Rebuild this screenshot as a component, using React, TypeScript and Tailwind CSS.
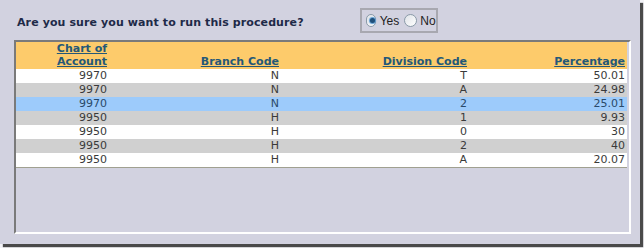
const rows = [
  { account: "9970", branch: "N", division: "T", pct: "50.01", tone: "white" },
  { account: "9970", branch: "N", division: "A", pct: "24.98", tone: "gray" },
  { account: "9970", branch: "N", division: "2", pct: "25.01", tone: "blue" },
  { account: "9950", branch: "H", division: "1", pct: "9.93", tone: "gray" },
  { account: "9950", branch: "H", division: "0", pct: "30", tone: "white" },
  { account: "9950", branch: "H", division: "2", pct: "40", tone: "gray" },
  { account: "9950", branch: "H", division: "A", pct: "20.07", tone: "white" },
];

const toneClass: Record<string, string> = {
  white: "bg-white",
  gray: "bg-[#d0d0d0]",
  blue: "bg-[#9dcbfb]",
};

const cols = "grid grid-cols-[93px_172px_188px_158px]";

const Radio = ({ checked }: { checked?: boolean }) => (
  <span className="relative inline-block w-[13px] h-[13px] rounded-full border border-[#8a9aa8] bg-gradient-to-br from-[#dfe3e8] to-white">
    {checked && (
      <span className="absolute left-[3px] top-[3px] w-[5px] h-[5px] rounded-full bg-[#1f4f7a] shadow-[0_0_1px_1px_#5a9ad0]" />
    )}
  </span>
);

const App = () => {
  return (
    <div className="w-[644px] h-[248px] bg-[#f2f2f6] overflow-hidden font-['DejaVu_Sans',Verdana,sans-serif]">
      <div className="w-[640px] h-[244px] bg-[#d2d2e0] shadow-[3px_3px_1px_#4a4a4a]">
        <div className="flex items-start pt-[8px] pl-[17px]">
          <h1 className="mt-[8px] text-[11px] leading-[14px] font-bold tracking-[0.1px] text-[#1e2a48]">
            Are you sure you want to run this procedure?
          </h1>
          <div className="ml-[56px] h-[25px] w-[78px] border-2 border-[#a8a8b0] flex items-center pl-[4px] text-[12px] text-[#222] font-['Liberation_Sans',Arial,sans-serif]">
            <Radio checked />
            <span className="ml-[4px]">Yes</span>
            <span className="ml-[5px] flex"><Radio /></span>
            <span className="ml-[3px]">No</span>
          </div>
        </div>

        <div className="mt-[7px] ml-[14px] w-[617px] h-[194px] border-t-2 border-l-2 border-[#7a7a7a] border-r-2 border-b-2 border-r-white border-b-white">
          <div className="w-[611px] border-b border-[#a0a090]">
            <div className={`${cols} bg-[#fdcb6b] h-[27px] items-end text-[11px] leading-[13px] font-bold text-[#245878]`}>
              <div className="text-right pr-[2px] pb-[1px]">
                <a className="underline">Chart of<br />Account</a>
              </div>
              <div className="text-right pr-[2px] pb-[1px]"><a className="underline">Branch Code</a></div>
              <div className="text-right pr-[2px] pb-[1px]"><a className="underline">Division Code</a></div>
              <div className="text-right pr-[2px] pb-[1px]"><a className="underline">Percentage</a></div>
            </div>
            {rows.map((r, i) => (
              <div
                key={i}
                className={`${cols} ${toneClass[r.tone]} h-[14px] items-center text-[11px] leading-[14px] ${r.tone === "blue" ? "text-[#2a4a6a]" : "text-[#3a3a3a]"}`}
              >
                <div className="text-right pr-[2px]">{r.account}</div>
                <div className="text-right pr-[2px]">{r.branch}</div>
                <div className="text-right pr-[2px]">{r.division}</div>
                <div className="text-right pr-[2px]">{r.pct}</div>
              </div>
            ))}
          </div>
        </div>
      </div>
    </div>
  );
};

export default App;
